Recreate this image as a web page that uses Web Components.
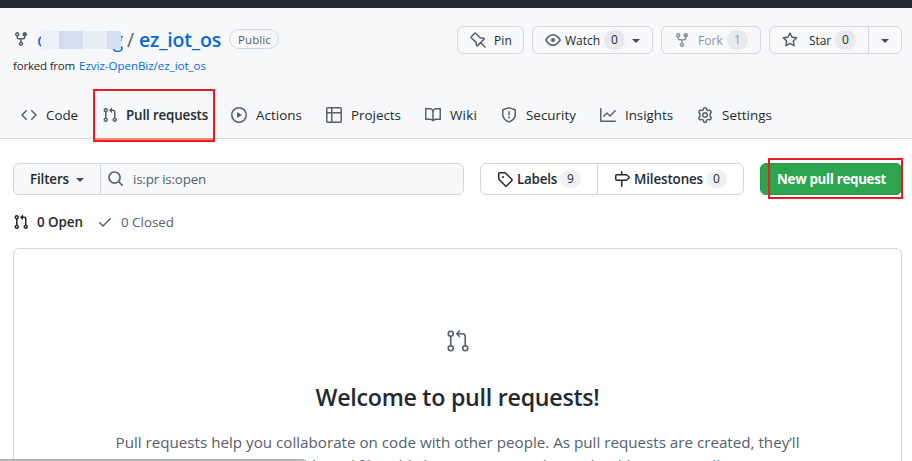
<!DOCTYPE html>
<html lang="en"><head><meta charset="utf-8"><title>Pull requests</title>
<style>
body{margin:0;width:912px;height:461px;overflow:hidden;background:#fff;font-family:"Open Sans","Noto Sans",sans-serif;color:#24292f}
</style></head><body><pulls-page></pulls-page>
<script>
const I={
fork:'<path d="M5 3.25a.75.75 0 11-1.5 0 .75.75 0 011.5 0zm0 2.122a2.25 2.25 0 10-1.5 0v.878A2.25 2.25 0 005.75 8.5h1.5v2.128a2.251 2.251 0 101.5 0V8.5h1.5a2.25 2.25 0 002.25-2.25v-.878a2.25 2.25 0 10-1.5 0v.878a.75.75 0 01-.75.75h-4.5A.75.75 0 015 6.25v-.878zm3.75 7.378a.75.75 0 11-1.5 0 .75.75 0 011.5 0zm3-8.75a.75.75 0 100-1.5.75.75 0 000 1.5z"/>',
pr:'<path d="M7.177 3.073L9.573.677A.25.25 0 0110 .854v4.792a.25.25 0 01-.427.177L7.177 3.427a.25.25 0 010-.354zM3.75 2.5a.75.75 0 100 1.5.75.75 0 000-1.5zm-2.25.75a2.25 2.25 0 113 2.122v5.256a2.251 2.251 0 11-1.5 0V5.372A2.25 2.25 0 011.5 3.25zM11 2.5h-1V4h1a1 1 0 011 1v5.628a2.251 2.251 0 101.5 0V5A2.5 2.5 0 0011 2.5zm1 10.25a.75.75 0 111.5 0 .75.75 0 01-1.5 0zM3.75 12a.75.75 0 100 1.5.75.75 0 000-1.5z"/>',
pin:'<g fill="none" stroke="currentColor" stroke-width="1.5" stroke-linejoin="round" stroke-linecap="round"><path d="M5.6 1.2l4.6 4.5 3.4.6c.5.1.7.6.3 1l-6.3 6.3c-.4.4-.9.2-1-.3l-.7-3.2L1.2 5.8c-.3-.3-.3-.6 0-.9l3.5-3.7c.3-.3.6-.3.9 0zM10.8 10.8l4.2 4.2"/></g>',
eye:'<path d="M1.679 7.932c.412-.621 1.242-1.75 2.366-2.717C5.175 4.242 6.527 3.5 8 3.5c1.473 0 2.824.742 3.955 1.715 1.124.967 1.954 2.096 2.366 2.717a.119.119 0 010 .136c-.412.621-1.242 1.75-2.366 2.717C10.825 11.758 9.473 12.5 8 12.5c-1.473 0-2.824-.742-3.955-1.715C2.92 9.818 2.09 8.69 1.679 8.068a.119.119 0 010-.136zM8 2c-1.981 0-3.67.992-4.933 2.078C1.797 5.169.88 6.423.43 7.1a1.619 1.619 0 000 1.798c.45.678 1.367 1.932 2.637 3.024C4.329 13.008 6.019 14 8 14c1.981 0 3.67-.992 4.933-2.078 1.27-1.091 2.187-2.345 2.637-3.023a1.619 1.619 0 000-1.798c-.45-.678-1.367-1.932-2.637-3.023C11.671 2.992 9.981 2 8 2zm0 8a2 2 0 100-4 2 2 0 000 4z"/>',
star:'<path fill-rule="evenodd" d="M8 .25a.75.75 0 01.673.418l1.882 3.815 4.21.612a.75.75 0 01.416 1.279l-3.046 2.97.719 4.192a.75.75 0 01-1.088.791L8 12.347l-3.766 1.98a.75.75 0 01-1.088-.79l.72-4.194L.818 6.374a.75.75 0 01.416-1.28l4.21-.611L7.327.668A.75.75 0 018 .25zm0 2.445L6.615 5.5a.75.75 0 01-.564.41l-3.097.45 2.24 2.184a.75.75 0 01.216.664l-.528 3.084 2.769-1.456a.75.75 0 01.698 0l2.77 1.456-.53-3.084a.75.75 0 01.216-.664l2.24-2.183-3.096-.45a.75.75 0 01-.564-.41L8 2.694z"/>',
code:'<path d="M4.72 3.22a.75.75 0 011.06 1.06L2.06 8l3.72 3.72a.75.75 0 11-1.06 1.06L.47 8.53a.75.75 0 010-1.06l4.25-4.25zm6.56 0a.75.75 0 10-1.06 1.06L13.94 8l-3.72 3.72a.75.75 0 101.06 1.06l4.25-4.25a.75.75 0 000-1.06l-4.25-4.25z"/>',
play:'<path fill-rule="evenodd" d="M1.5 8a6.5 6.5 0 1113 0 6.5 6.5 0 01-13 0zM8 0a8 8 0 100 16A8 8 0 008 0zM6.379 5.227A.25.25 0 006 5.442v5.117a.25.25 0 00.379.214l4.264-2.559a.25.25 0 000-.428L6.379 5.227z"/>',
table:'<path fill-rule="evenodd" d="M0 1.75C0 .784.784 0 1.75 0h12.5C15.216 0 16 .784 16 1.75v12.5A1.75 1.75 0 0114.25 16H1.75A1.75 1.75 0 010 14.25zM1.5 6.5v7.75c0 .138.112.25.25.25H5v-8zM6.5 6.5v8h7.75a.25.25 0 00.25-.25V6.5zM14.5 5V1.75a.25.25 0 00-.25-.25H6.5V5zM5 5V1.5H1.75a.25.25 0 00-.25.25V5z"/>',
book:'<path fill-rule="evenodd" d="M0 1.75A.75.75 0 01.75 1h4.253c1.227 0 2.317.59 3 1.501A3.744 3.744 0 0111.006 1h4.245a.75.75 0 01.75.75v10.5a.75.75 0 01-.75.75h-4.507a2.25 2.25 0 00-1.591.659l-.622.621a.75.75 0 01-1.06 0l-.622-.621A2.25 2.25 0 005.258 13H.75a.75.75 0 01-.75-.75V1.75zm8.755 3a2.25 2.25 0 012.25-2.25H14.5v9h-3.757c-.71 0-1.4.201-1.992.572l.004-7.322zm-1.504 7.324l.004-5.073-.002-2.253A2.25 2.25 0 005.003 2.5H1.5v9h3.757a3.75 3.75 0 011.994.574z"/>',
shield:'<path fill-rule="evenodd" d="M7.467.133a1.75 1.75 0 011.066 0l5.25 1.68A1.75 1.75 0 0115 3.48V7c0 1.566-.32 3.182-1.303 4.682-.983 1.498-2.585 2.813-5.032 3.855a1.7 1.7 0 01-1.33 0c-2.447-1.042-4.049-2.357-5.032-3.855C1.32 10.182 1 8.566 1 7V3.48a1.75 1.75 0 011.217-1.667l5.25-1.68zm.61 1.429a.25.25 0 00-.153 0l-5.25 1.68a.25.25 0 00-.174.238V7c0 1.358.275 2.666 1.057 3.86.784 1.194 2.121 2.34 4.366 3.297a.2.2 0 00.154 0c2.245-.956 3.582-2.104 4.366-3.298C13.225 9.666 13.5 8.36 13.5 7V3.48a.25.25 0 00-.174-.237l-5.25-1.68zM9 10.5a1 1 0 11-2 0 1 1 0 012 0zm-.25-5.75a.75.75 0 10-1.5 0v3a.75.75 0 001.5 0v-3z"/>',
graph:'<path d="M1.5 1.75a.75.75 0 00-1.5 0v12.5c0 .414.336.75.75.75h14.5a.75.75 0 000-1.5H1.5V1.75zm14.28 2.53a.75.75 0 00-1.06-1.06L10 7.94 7.53 5.47a.75.75 0 00-1.06 0L3.22 8.72a.75.75 0 001.06 1.06L7 7.06l2.47 2.47a.75.75 0 001.06 0l5.25-5.25z"/>',
gear:'<g fill="none" stroke="currentColor" stroke-width="1.5" stroke-linejoin="round"><path d="M6.7 1.2Q8 .4 9.3 1.2L9.7 2.9l1.3.7 1.8-.5q1.3.7 1.5 2.2L13.1 6.7v2.6l1.2 1.4q-.2 1.5-1.5 2.2l-1.8-.5-1.3.7-.4 1.7q-1.3.8-2.6 0l-.4-1.7-1.3-.7-1.8.5q-1.3-.7-1.5-2.2l1.2-1.4V6.7L1.7 5.3q.2-1.5 1.5-2.2l1.8.5 1.3-.7z"/><circle cx="8" cy="8" r="2.25"/></g>',
search:'<path fill-rule="evenodd" d="M11.5 7a4.499 4.499 0 11-8.998 0A4.499 4.499 0 0111.5 7zm-.82 4.74a6 6 0 111.06-1.06l3.04 3.04a.75.75 0 11-1.06 1.06l-3.04-3.04z" transform="translate(-.8 -.8) scale(1.05)"/>',
tag:'<path fill-rule="evenodd" d="M2.5 7.775V2.75a.25.25 0 01.25-.25h5.025a.25.25 0 01.177.073l6.25 6.25a.25.25 0 010 .354l-5.025 5.025a.25.25 0 01-.354 0l-6.25-6.25a.25.25 0 01-.073-.177zm-1.5 0V2.75C1 1.784 1.784 1 2.75 1h5.025c.464 0 .91.184 1.238.513l6.25 6.25a1.75 1.75 0 010 2.474l-5.026 5.026a1.75 1.75 0 01-2.474 0l-6.25-6.25A1.75 1.75 0 011 7.775zM6 5a1 1 0 100 2 1 1 0 000-2z"/>',
sign:'<path fill-rule="evenodd" d="M7.75 0a.75.75 0 01.75.75V3h3.634c.414 0 .814.147 1.13.414l2.07 1.75a1.75 1.75 0 010 2.672l-2.07 1.75a1.75 1.75 0 01-1.13.414H8.5v5.25a.75.75 0 11-1.5 0V10H2.75A1.75 1.75 0 011 8.25v-3.5C1 3.784 1.784 3 2.75 3H7V.75A.75.75 0 017.75 0zm0 8.5h4.384a.25.25 0 00.161-.06l2.07-1.75a.25.25 0 000-.38l-2.07-1.75a.25.25 0 00-.161-.06H2.75a.25.25 0 00-.25.25v3.5c0 .138.112.25.25.25h5z"/>',
check:'<path d="M13.78 4.22a.75.75 0 010 1.06l-7.25 7.25a.75.75 0 01-1.06 0L2.22 9.28a.75.75 0 011.06-1.06L6 10.94l6.72-6.72a.75.75 0 011.06 0z"/>',
pr24:'<g transform="scale(.66667)" fill="none" stroke="currentColor" stroke-width="1.6"><circle cx="4.75" cy="4.75" r="2.5"/><circle cx="4.75" cy="19.25" r="2.5"/><circle cx="19.25" cy="19.25" r="2.5"/><path d="M4.75 7.3v9.4M19.25 16.7V7.5a2.75 2.75 0 00-2.75-2.75H11M13.5 2l-2.75 2.75L13.5 7.5" stroke-linecap="round" stroke-linejoin="round"/></g>'
};
class Base extends HTMLElement{
  build(html){this.attachShadow({mode:'open'}).innerHTML=html;}
}
// <ui-icon name size>
customElements.define('ui-icon',class extends Base{connectedCallback(){
  if(this.shadowRoot)return;const s=this.getAttribute('size')||16;
  this.build(`<style>:host{display:block;flex:none;width:${s}px;height:${s}px;color:var(--icon,#57606a)}svg{display:block;fill:currentColor;overflow:visible}</style><svg width="${s}" height="${s}" viewBox="0 0 16 16">${I[this.getAttribute('name')]}</svg>`);
}});
// <fit-text w>: single line tracked to a set width
customElements.define('fit-text',class extends Base{connectedCallback(){
  if(this.shadowRoot)return;const w=+this.getAttribute('w');
  this.build(`<style>:host{display:block;flex:none;width:${w}px;white-space:nowrap}span{display:inline-block}</style><span><slot></slot></span>`);
  const s=this.shadowRoot.querySelector('span');
  const n=this.textContent.length;
  s.style.letterSpacing=((w-s.getBoundingClientRect().width)/n)+'px';
}});
customElements.define('ui-caret',class extends Base{connectedCallback(){
  if(this.shadowRoot)return;this.build('<style>:host{display:block;flex:none;border:4px solid transparent;border-top-color:var(--caret,#424a53);border-bottom:0}</style>');
}});
customElements.define('ui-counter',class extends Base{connectedCallback(){
  if(this.shadowRoot)return;this.build('<style>:host{display:block;flex:none;width:21px;height:var(--ch,20px);line-height:var(--ch,20px);border-radius:11px;background:var(--cb,#e7e9ec);text-align:center;font-size:12px;font-weight:500}</style><slot></slot>');
}});
customElements.define('ui-button',class extends Base{connectedCallback(){
  if(this.shadowRoot)return;this.build('<style>:host{box-sizing:border-box;display:flex;flex:none;align-items:center;height:28px;border:1px solid #d5d8db;border-radius:6px;font-size:12px;font-weight:500;background:#f6f8fa}</style><slot></slot>');
}});
customElements.define('nav-tab',class extends Base{connectedCallback(){
  if(this.shadowRoot)return;const a=this.hasAttribute('active');
  this.build(`<style>:host{position:relative;display:flex;flex:none;align-items:center;height:48px;font-size:13.4px;font-weight:${a?600:400}}fit-text{margin-left:${a?8:9}px}
  .mark{position:absolute;left:-9px;top:-2px;width:118px;height:49px;border:2px solid #ed1c24}.mark i{position:absolute;left:0;right:0;bottom:0;height:2px;background:#fd8c73}</style>
  <ui-icon name="${this.getAttribute('icon')}"></ui-icon><fit-text w="${this.getAttribute('w')}">${this.getAttribute('label')}</fit-text>${a?'<div class="mark"><i></i></div>':''}`);
}});
customElements.define('repo-header',class extends Base{connectedCallback(){
 if(this.shadowRoot)return;this.build(`<style>
:host{box-sizing:border-box;display:block;height:139px;background:#f6f8fa;border-top:8px solid #24292f;border-bottom:1px solid #d5dae1}
.top{display:flex;height:83px}.left{padding:17px 0 0 13px;width:431px}
.title{display:flex;align-items:center;height:28px;font-size:19.5px;line-height:30px;color:#0969da}
.title ui-icon{margin:-1px 8px 0 0}.owner{position:relative;display:flex;justify-content:space-between;width:86px;margin:1px 4px 0 0}.mask{position:absolute;left:4px;top:6px;width:80px;height:18px;background:linear-gradient(90deg,#edf2fa 18px,#d3dff1 18px 42px,#e8edf6 42px 66px,#d3dff1 66px)}
.slash{color:#57606a;width:12px;margin-top:1px}.repo{font-weight:600;margin-top:1px}
.pub{box-sizing:border-box;height:20px;width:50px;border:1px solid #d0d7de;border-radius:10px;padding-left:8px;font-size:11.5px;line-height:20px;color:#57606a;font-weight:500;margin:0 0 0 8px}
.from{display:flex;font-size:11.5px;line-height:18px;margin-top:4px}.from fit-text+fit-text{color:#0969da;margin-left:4px}
.acts{display:flex;padding:18px 0 0 13px;height:28px;gap:8px}
.tabs{display:flex;padding-left:21px;height:48px}
nav-tab{margin-right:24px}.sep{width:1px;height:26px;background:#d5d8db}
</style>
<div class="top"><div class="left"><div class="title"><ui-icon name="fork"></ui-icon><div class="owner"><span>c</span><span>g</span><div class="mask"></div></div><span class="slash">/</span><fit-text class="repo" w="82">ez_iot_os</fit-text><div class="pub"><fit-text w="33">Public</fit-text></div></div>
<div class="from"><fit-text w="62">forked from</fit-text><fit-text w="127">Ezviz-OpenBiz/ez_iot_os</fit-text></div></div>
<div class="acts">
<ui-button style="width:67px"><ui-icon name="pin" style="margin:0 8px 0 12px"></ui-icon><fit-text w="18">Pin</fit-text></ui-button>
<ui-button style="width:121px"><ui-icon name="eye" style="margin:0 4px 0 12px"></ui-icon><fit-text w="35">Watch</fit-text><ui-counter style="margin:0 7px 0 4px">0</ui-counter><ui-caret style="margin-top:2px"></ui-caret></ui-button>
<ui-button style="width:100px;color:#8c959f;--icon:#8c959f"><ui-icon name="fork" style="margin:0 8px 0 12px"></ui-icon><fit-text w="25">Fork</fit-text><ui-counter style="margin-left:4px">1</ui-counter></ui-button>
<ui-button style="width:133px"><ui-icon name="star" style="margin:0 11px 0 12px"></ui-icon><fit-text w="22">Star</fit-text><ui-counter style="margin:0 12px 0 4px">0</ui-counter><div class="sep"></div><ui-caret style="margin:1px 0 0 12px"></ui-caret></ui-button>
</div></div>
<div class="tabs">
<nav-tab icon="code" w="32" label="Code"></nav-tab>
<nav-tab active icon="pr" w="82" label="Pull requests" style="margin-right:23px"></nav-tab>
<nav-tab icon="play" w="46" label="Actions"></nav-tab>
<nav-tab icon="table" w="50" label="Projects"></nav-tab>
<nav-tab icon="book" w="27" label="Wiki"></nav-tab>
<nav-tab icon="shield" w="50" label="Security"></nav-tab>
<nav-tab icon="graph" w="48" label="Insights"></nav-tab>
<nav-tab icon="gear" w="50" label="Settings"></nav-tab>
</div>`);
}});
customElements.define('pulls-toolbar',class extends Base{connectedCallback(){
 if(this.shadowRoot)return;this.build(`<style>
:host{display:flex;height:32px;padding:24px 10px 0 13px;font-size:13.4px;line-height:20px}
.g{box-sizing:border-box;display:flex;align-items:center;height:32px;border:1px solid #d0d7de;border-radius:6px}
.q{width:451px;background:#f6f8fa;margin-right:16px}.l{width:264px;margin-right:16px;--icon:#24292f;--cb:#eff1f3;--ch:18px;font-weight:600}
.sep{width:1px;height:30px;background:#d0d7de}
.new{position:relative;box-sizing:border-box;width:142px;height:32px;border:1px solid #2a964a;border-radius:6px;background:#2da44e;color:#fff;font-weight:700;padding:5px 0 0 16px}
.mark{position:absolute;left:7px;top:-6px;width:131px;height:37px;border:2px solid #ed1c24}
</style>
<div class="g q"><fit-text w="39" style="margin-left:16px;font-weight:600">Filters</fit-text><ui-caret style="margin:2px 16px 0 7px"></ui-caret><div class="sep"></div><ui-icon name="search" style="margin:0 9px 0 7px"></ui-icon><fit-text w="73" style="color:#57606a">is:pr is:open</fit-text></div>
<div class="g l"><ui-icon name="tag" style="margin:0 4px 0 16px"></ui-icon><fit-text w="40">Labels</fit-text><ui-counter style="margin:0 15px 0 3px">9</ui-counter><div class="sep" style="margin-left:1px"></div><ui-icon name="sign" style="margin:0 4px 0 16px"></ui-icon><fit-text w="69">Milestones</fit-text><ui-counter style="margin-left:3px">0</ui-counter></div>
<div class="new"><fit-text w="109">New pull request</fit-text><div class="mark"></div></div>`);
}});
customElements.define('pulls-states',class extends Base{connectedCallback(){
 if(this.shadowRoot)return;this.build(`<style>:host{display:flex;align-items:center;height:20px;padding:17px 0 16px 13px;font-size:13.4px;line-height:20px}</style>
<ui-icon name="pr" style="--icon:#24292f;margin-right:8px"></ui-icon><fit-text w="46" style="font-weight:600">0 Open</fit-text><ui-icon name="check" style="margin:0 8px 0 14px"></ui-icon><fit-text w="53" style="color:#57606a">0 Closed</fit-text>`);
}});
customElements.define('blank-slate',class extends Base{connectedCallback(){
 if(this.shadowRoot)return;this.build(`<style>:host{box-sizing:border-box;display:flex;flex-direction:column;align-items:center;width:889px;height:300px;margin-left:13px;border:1px solid #d0d7de;border-radius:6px;padding-top:80px}
h3{margin:26px 0 0;font-size:23.2px;line-height:36px;font-weight:600}p{margin:15px 0 0;font-size:15.2px;line-height:24px;color:#57606a;display:flex;flex-direction:column;align-items:center}.two{display:flex;margin-top:-1px}.two fit-text+fit-text{color:#0969da}</style>
<ui-icon name="pr24" size="24"></ui-icon><h3><fit-text w="284">Welcome to pull requests!</fit-text></h3>
<p><fit-text w="684">Pull requests help you collaborate on code with other people. As pull requests are created, they’ll</fit-text><span class="two"><fit-text w="562">appear here in a searchable and filterable list. To get started, you should create a&nbsp;</fit-text><fit-text w="86">pull request</fit-text>.</span></p>`);
}});
customElements.define('status-strip',class extends Base{connectedCallback(){
 if(this.shadowRoot)return;this.build('<style>:host{position:absolute;left:0;top:459px;width:305px;height:2px;background:#b5b5b5;border-radius:0 3px 0 0}</style>');
}});
customElements.define('pulls-page',class extends Base{connectedCallback(){
 if(this.shadowRoot)return;this.build('<style>:host{display:block;position:relative;width:912px;height:461px;overflow:hidden}</style><repo-header></repo-header><pulls-toolbar></pulls-toolbar><pulls-states></pulls-states><blank-slate></blank-slate><status-strip></status-strip>');
}});
</script></body></html>
